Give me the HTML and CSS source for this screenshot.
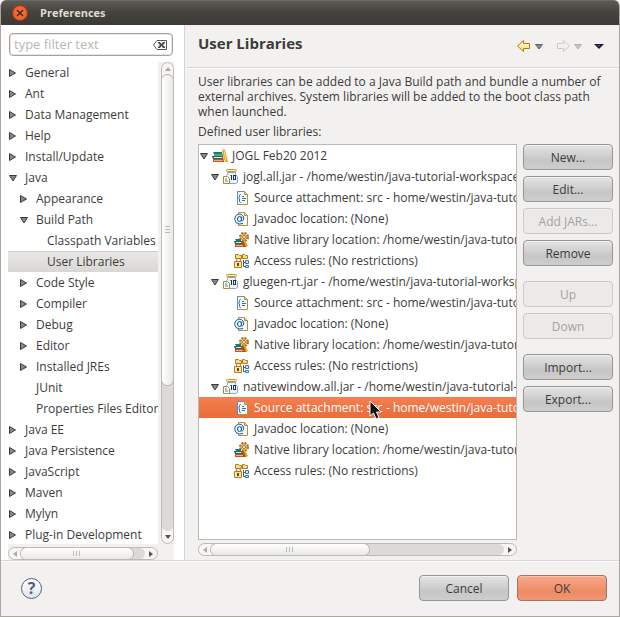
FILE: index.html
```html
<!DOCTYPE html>
<html lang="en">
<head>
<meta charset="utf-8">
<title>Preferences</title>
<link rel="stylesheet" href="styles.css">
</head>
<body>
<svg class="defs" aria-hidden="true">
  <defs>
    <linearGradient id="gold" x1="0" y1="0" x2="0" y2="1"><stop offset="0" stop-color="#fffbe0"/><stop offset="1" stop-color="#f8dc70"/></linearGradient>
    <symbol id="closed" viewBox="0 0 8 8"><path d="M.5 .5v7L6.500 4z" fill="#888" stroke="#3c3c3c"/></symbol>
    <symbol id="open" viewBox="0 0 8 8"><path d="M.5 1.500h7L4 7z" fill="#888" stroke="#3c3c3c"/></symbol>
    <symbol id="library" viewBox="0 0 16 16">
      <path d="M1 4h9v2H2z" fill="#16806f"/><path d="M2 6h9v2H2z" fill="#52a98d"/>
      <path d="M0 8h11v3H1z" fill="#17657c"/><path d="M2 9h9v1H2z" fill="#e4f0ce"/>
      <path d="M1 11h10v3H1z" fill="#c6532b"/><path d="M2 12h9v1H2z" fill="#f5b45e"/>
      <path d="M10 3l2-2 1 1 3 12h-3z" fill="#ed9b17"/><path d="M12 3l2 10" stroke="#ffe18a"/><path d="M10 10l1 4h1l-1-6z" fill="#a84d17"/>
    </symbol>
    <symbol id="jar" viewBox="0 0 16 16">
      <path d="M4.500 3.500h8v2l2 2v6l-2 1h-8l-1-1v-7l1-1z" fill="#edf4fa" stroke="#8fa3bd"/>
      <rect x="3.500" y=".5" width="10" height="2" rx="1" fill="#fff2b5" stroke="#c89531"/>
      <path d="M.5 7.500h4l2 2v5h-6z" fill="#fffdf1" stroke="#a98a3b"/><path d="M2 10h2M2 12h3" stroke="#587aa9"/>
      <path d="M8.500 6v5M7.500 6.500h1" fill="none" stroke="#183457"/><rect x="10.500" y="6.500" width="2" height="4" fill="none" stroke="#183457"/>
    </symbol>
    <symbol id="source" viewBox="0 0 16 16">
      <path d="M3.500 1.500h7l3 3v10h-10z" fill="#f4f9ff" stroke="#b1903d"/><path d="M3.500 14.500v-13h6" fill="none" stroke="#6f8baa"/><path d="M10.500 1.500v3h3" fill="#e9ce7b" stroke="#b1903d"/>
      <path d="M7 4.500H6.500q-1 0-1 1V7l-1 1 1 1v2.500q0 1 1 1H7M8 6.500h2M8 8.500h4M8 10.500h3" fill="none" stroke="#2876b2"/>
    </symbol>
    <symbol id="javadoc" viewBox="0 0 16 16">
      <path d="M4.500 1.500h6l3 3v10h-9z" fill="#f4f9ff" stroke="#b1903d"/><path d="M10.500 1.500v3h3" fill="#e9ce7b" stroke="#b1903d"/>
      <path d="M9 12.500Q5 14 2 11.500-.5 8 1.500 5 4 2 7.500 3.500 11 5.500 9.500 9 8 11 7 9.500L8 5.500" fill="#e9f5ff" stroke="#1f6299"/><ellipse cx="5.500" cy="8" rx="2" ry="2.500" fill="#e9f5ff" stroke="#174f86"/>
    </symbol>
    <symbol id="native" viewBox="0 0 16 16">
      <circle cx="10" cy="5" r="4" fill="none" stroke="#a6711d" stroke-width="2" stroke-dasharray="2 1.140"/><circle cx="10" cy="5" r="3" fill="#f9e2a8" stroke="#c4913c"/><circle cx="10" cy="5" r="1.500" fill="#fff" stroke="#a6711d"/>
      <path d="M1 7h6v2H2z" fill="#16806f"/><path d="M0 9h8v3H1z" fill="#17657c"/><path d="M2 10h6v1H2z" fill="#e4f0ce"/><path d="M1 12h9v3H1z" fill="#c6532b"/><path d="M2 13h7v1H2z" fill="#f5b45e"/><path d="M8 8l2-1 4 7-2 1z" fill="#ed9b17"/><path d="M7 10l3 5h2L9 8z" fill="#a84d17"/>
    </symbol>
    <symbol id="access" viewBox="0 0 16 16">
      <path d="M1.500 5.500v-4h3l1 1h2v3zM8.500 5.500v-4h2l1 1h2v3z" fill="#fbdc82" stroke="#b37a22"/>
      <path d="M9.500 7v6.500h2M9.500 9.500h2" fill="none" stroke="#375d8b"/><path d="M11.500 7.500h3v3h-3zM11.500 12.500h3v2h-3z" fill="#d9e9fa" stroke="#3973ab"/>
      <path d="M2.500 9V7q0-1.500 2-1.500t2 1.500v2" fill="none" stroke="#b37a22"/><path d="M.5 8.500h7v6h-7z" fill="#ffe5a0" stroke="#b37a22"/><path d="M3 10h2v3H3z" fill="#69451a"/>
    </symbol>
    <symbol id="up" viewBox="0 0 8 8"><path d="M1 6h6L4 2z"/></symbol>
    <symbol id="down" viewBox="0 0 8 8"><path d="M1 2h6L4 6z"/></symbol>
    <symbol id="left" viewBox="0 0 8 8"><path d="M6 1v6L2 4z"/></symbol>
    <symbol id="right" viewBox="0 0 8 8"><path d="M2 1v6l4-3z"/></symbol>
  </defs>
</svg>
<div class="window">
  <header class="titlebar">
    <button class="close" aria-label="Close"><svg viewBox="0 0 14 14"><path d="M4 4l6 6m0-6l-6 6" stroke="#47271b" stroke-width="1.500"/></svg></button>
    <span>Preferences</span>
  </header>
  <div class="body">
    <nav class="sidebar" aria-label="Preference pages">
      <div class="filter">
        <input type="text" placeholder="type filter text" aria-label="Filter text">
        <button aria-label="Clear filter"><svg viewBox="0 0 16 12"><path d="M5 1.500h9.500v9H5L1.500 6z" fill="#fff" stroke="#555"/><path d="M6 3h2l1.500 2L11 3h2v1l-2 2 2 2v1h-2L9.500 7 8 9H6V8l2-2-2-2z" fill="#4c4c4c"/></svg></button>
      </div>
      <div class="pane">
        <ul class="tree">
          <li class="row"><svg class="arrow"><use href="#closed"/></svg>General</li>
          <li class="row"><svg class="arrow"><use href="#closed"/></svg>Ant</li>
          <li class="row"><svg class="arrow"><use href="#closed"/></svg>Data Management</li>
          <li class="row"><svg class="arrow"><use href="#closed"/></svg>Help</li>
          <li class="row"><svg class="arrow"><use href="#closed"/></svg>Install/Update</li>
          <li class="row"><svg class="arrow"><use href="#open"/></svg>Java</li>
          <li class="row level-2"><svg class="arrow"><use href="#closed"/></svg>Appearance</li>
          <li class="row level-2"><svg class="arrow"><use href="#open"/></svg>Build Path</li>
          <li class="row level-3"><span class="arrow"></span>Classpath Variables</li>
          <li class="row level-3 current"><span class="arrow"></span>User Libraries</li>
          <li class="row level-2"><svg class="arrow"><use href="#closed"/></svg>Code Style</li>
          <li class="row level-2"><svg class="arrow"><use href="#closed"/></svg>Compiler</li>
          <li class="row level-2"><svg class="arrow"><use href="#closed"/></svg>Debug</li>
          <li class="row level-2"><svg class="arrow"><use href="#closed"/></svg>Editor</li>
          <li class="row level-2"><svg class="arrow"><use href="#closed"/></svg>Installed JREs</li>
          <li class="row level-2"><span class="arrow"></span>JUnit</li>
          <li class="row level-2"><span class="arrow"></span>Properties Files Editor</li>
          <li class="row"><svg class="arrow"><use href="#closed"/></svg>Java EE</li>
          <li class="row"><svg class="arrow"><use href="#closed"/></svg>Java Persistence</li>
          <li class="row"><svg class="arrow"><use href="#closed"/></svg>JavaScript</li>
          <li class="row"><svg class="arrow"><use href="#closed"/></svg>Maven</li>
          <li class="row"><svg class="arrow"><use href="#closed"/></svg>Mylyn</li>
          <li class="row"><svg class="arrow"><use href="#closed"/></svg>Plug-in Development</li>
        </ul>
        <div class="scroll vertical"><svg class="faint"><use href="#up"/></svg><div class="track"><div class="thumb"></div></div><svg><use href="#down"/></svg></div>
        <div class="scroll horizontal"><svg class="faint"><use href="#left"/></svg><div class="track"><div class="thumb wide"></div></div><svg><use href="#right"/></svg></div>
      </div>
    </nav>
    <main class="page">
      <div class="page-head">
        <h1>User Libraries</h1>
        <button class="tool" aria-label="Back"><svg class="history" viewBox="0 0 28 14"><path d="M1.500 7l6-5.500v3h6v5h-6v3z" fill="url(#gold)" stroke="#b27a0b"/><path d="M19.500 5.500h7L23 10z" fill="#888" stroke="#666"/></svg></button>
        <button class="tool" aria-label="Forward" disabled><svg class="history" viewBox="0 0 28 14"><path d="M14.500 7l-6-5.500v3h-6v5h6v3z" fill="#f2f1f0" stroke="#cdcbc8"/><path d="M19.500 5.500h7L23 10z" fill="#c4c2bf" stroke="#b6b4b1"/></svg></button>
        <button class="tool" aria-label="Menu"><svg class="menu" viewBox="0 0 10 14"><path d="M0 5h10L5 10z" fill="#171727"/><path d="M2 6h5L5 8z" fill="#524887"/></svg></button>
      </div>
      <div class="content">
        <p class="description">User libraries can be added to a Java Build path and bundle a number of external archives. System libraries will be added to the boot class path when launched.</p>
        <p class="caption">Defined user libraries:</p>
        <div class="columns">
          <div class="library-pane">
            <ul class="libraries">
              <li class="row"><svg class="arrow"><use href="#open"/></svg><svg class="icon"><use href="#library"/></svg>JOGL Feb20 2012</li>
              <li class="row level-2"><svg class="arrow"><use href="#open"/></svg><svg class="icon"><use href="#jar"/></svg>jogl.all.jar - /home/westin/java-tutorial-workspace/jogl</li>
              <li class="row level-3"><span class="arrow"></span><svg class="icon"><use href="#source"/></svg>Source attachment: src - home/westin/java-tutorial</li>
              <li class="row level-3"><span class="arrow"></span><svg class="icon"><use href="#javadoc"/></svg>Javadoc location: (None)</li>
              <li class="row level-3"><span class="arrow"></span><svg class="icon"><use href="#native"/></svg>Native library location: /home/westin/java-tutorial</li>
              <li class="row level-3"><span class="arrow"></span><svg class="icon"><use href="#access"/></svg>Access rules: (No restrictions)</li>
              <li class="row level-2"><svg class="arrow"><use href="#open"/></svg><svg class="icon"><use href="#jar"/></svg>gluegen-rt.jar - /home/westin/java-tutorial-workspace</li>
              <li class="row level-3"><span class="arrow"></span><svg class="icon"><use href="#source"/></svg>Source attachment: src - home/westin/java-tutorial</li>
              <li class="row level-3"><span class="arrow"></span><svg class="icon"><use href="#javadoc"/></svg>Javadoc location: (None)</li>
              <li class="row level-3"><span class="arrow"></span><svg class="icon"><use href="#native"/></svg>Native library location: /home/westin/java-tutorial</li>
              <li class="row level-3"><span class="arrow"></span><svg class="icon"><use href="#access"/></svg>Access rules: (No restrictions)</li>
              <li class="row level-2"><svg class="arrow"><use href="#open"/></svg><svg class="icon"><use href="#jar"/></svg>nativewindow.all.jar - /home/westin/java-tutorial-workspace</li>
              <li class="row level-3 selected"><span class="arrow"></span><svg class="icon"><use href="#source"/></svg>Source attachment: src - home/westin/java-tutorial<svg class="pointer" viewBox="0 0 13 20"><path d="M1 1v15l3.500-3 2.500 6 3-1.500-2.500-5.500H12z" fill="#111" stroke="#fff"/></svg></li>
              <li class="row level-3"><span class="arrow"></span><svg class="icon"><use href="#javadoc"/></svg>Javadoc location: (None)</li>
              <li class="row level-3"><span class="arrow"></span><svg class="icon"><use href="#native"/></svg>Native library location: /home/westin/java-tutorial</li>
              <li class="row level-3"><span class="arrow"></span><svg class="icon"><use href="#access"/></svg>Access rules: (No restrictions)</li>
            </ul>
            <div class="scroll horizontal"><svg class="faint"><use href="#left"/></svg><div class="track"><div class="thumb"></div></div><svg><use href="#right"/></svg></div>
          </div>
          <div class="actions">
            <div class="group"><button class="button">New...</button><button class="button">Edit...</button><button class="button" disabled>Add JARs...</button><button class="button">Remove</button></div>
            <div class="group"><button class="button" disabled>Up</button><button class="button" disabled>Down</button></div>
            <div class="group"><button class="button">Import...</button><button class="button">Export...</button></div>
          </div>
        </div>
      </div>
    </main>
  </div>
  <footer class="footer">
    <button class="help" aria-label="Help">?</button>
    <button class="button">Cancel</button>
    <button class="button primary">OK</button>
  </footer>
</div>
</body>
</html>
```
FILE: styles.css
```css
* { box-sizing: border-box; }
body { margin: 0; background: #fff; color: #3c3c3c; font: 12px/15px "Open Sans", sans-serif; }
button, input { font: inherit; color: inherit; }
button { padding: 0; border: 0; background: none; }
ul, p, h1 { margin: 0; padding: 0; list-style: none; }
svg { display: block; flex: none; }
.defs { position: absolute; width: 0; height: 0; }

.window { display: flex; flex-direction: column; height: 100vh; min-height: 560px; overflow: hidden; background: #f2f1f0; border: solid #aaa6a1; border-width: 0 1px 1px; border-radius: 6px 6px 0 0; }
.titlebar { display: flex; align-items: center; gap: 12px; flex: none; height: 25px; padding: 0 11px 1px; background: linear-gradient(#5b5a55, #44433e 45%, #3b3a36); border-top: 1px solid #6c6a65; color: #dfdbd2; font-size: 11px; font-weight: bold; }
.close { width: 16px; height: 16px; border: 1px solid #a33b18; border-radius: 50%; background: radial-gradient(#f57848, #e95420); }
.close svg { width: 14px; height: 14px; }

.body { display: flex; flex: 1; min-height: 0; border-bottom: 1px solid #d8d6d4; }
.sidebar { display: flex; flex-direction: column; gap: 6px; flex: none; width: 184px; padding: 8px 10px 0 7px; background: #fff; border-right: 1px solid #d6d4d2; }
.filter { display: flex; align-items: center; flex: none; height: 23px; margin: 0 1px; padding: 0 4px; border: 1px solid #a5a29e; border-radius: 4px; background: #fff; box-shadow: inset 0 0 0 1px #e6e4e2; }
.filter input { flex: 1; min-width: 0; padding: 0; border: 0; outline: 0; background: none; font-size: 13px; }
.filter input::placeholder { color: #b9b7b4; }
.filter svg { width: 16px; height: 12px; }
.pane { display: grid; grid-template: minmax(0, 1fr) 16px / minmax(0, 1fr) 16px; flex: 1; min-height: 0; background: #f2f1f0; }
.tree { overflow: hidden; background: #fff; }

.row { position: relative; display: flex; align-items: center; height: 21px; padding-left: 1px; white-space: nowrap; }
.level-2 { padding-left: 12px; }
.level-3 { padding-left: 23px; }
.arrow { flex: none; width: 8px; height: 8px; margin-right: 8px; }
.current { background: linear-gradient(#cfcdca 1px, #e9e8e6 1px, #d9d7d5); }

.scroll { display: flex; align-items: center; overflow: hidden; border: 1px solid #bdbab6; border-radius: 7px; background: #f7f6f5; }
.scroll > svg { width: 8px; height: 8px; fill: #555; }
.scroll > .faint { fill: #aaa; }
.vertical { flex-direction: column; justify-self: end; width: 13px; padding: 2px 0; }
.horizontal { align-self: end; width: 100%; height: 13px; padding: 0 2px; }
.track { display: flex; flex: 1; background: #dcdad7; }
.vertical .track { width: 100%; margin: 2px 0; border-radius: 6px; }
.horizontal .track { height: 100%; margin: 0 2px; border-radius: 6px; }
.thumb { border-radius: 6px; box-shadow: 0 0 0 1px #b5b2ae; background: repeating-linear-gradient(#bbb 0 1px, transparent 1px 3px) center / 5px 8px no-repeat, linear-gradient(90deg, #fff, #e9e8e6); }
.vertical .thumb { width: 100%; height: 68%; }
.horizontal .thumb { height: 100%; width: 54%; background: repeating-linear-gradient(90deg, #bbb 0 1px, transparent 1px 3px) center / 8px 5px no-repeat, linear-gradient(#fff, #e9e8e6); }
.horizontal .wide { width: 90%; }

.page { display: flex; flex-direction: column; flex: 1; min-width: 0; margin-left: 1px; }
.page-head { display: flex; align-items: center; gap: 11px; flex: none; height: 43px; padding: 0 15px 0 12px; border-bottom: 1px solid #d8d6d4; box-shadow: 0 1px #fafafa; }
.page-head h1 { flex: 1; padding-bottom: 6px; font-size: 15px; line-height: 20px; }
.history { width: 28px; height: 14px; }
.menu { width: 10px; height: 14px; }
.content { display: flex; flex-direction: column; flex: 1; min-height: 0; padding: 6px 6px 4px 12px; }
.caption { margin: 5px 0; }
.columns { display: flex; gap: 6px; flex: 1; min-height: 0; }
.library-pane { display: flex; flex-direction: column; gap: 3px; flex: 1; min-width: 0; }
.libraries { flex: 1; min-height: 0; overflow: hidden; border: 1px solid #bdbab6; background: #fff; }
.libraries .arrow { margin-right: 4px; }
.icon { width: 16px; height: 16px; margin-right: 4px; }
.selected { background: linear-gradient(#f47f50, #e96c3c); color: #fff; }
.pointer { position: absolute; left: 170px; top: 3px; width: 13px; height: 20px; z-index: 1; }

.actions { display: flex; flex-direction: column; gap: 15px; flex: none; width: 90px; }
.group { display: flex; flex-direction: column; gap: 6px; }
.button { width: 90px; height: 26px; border: 1px solid #989693; border-radius: 4px; background: linear-gradient(#e4e4e4, #c6c6c6 65%, #cecece); box-shadow: inset 0 1px #f1f1f1; }
.button:disabled { border-color: #cbc9c6; background: #ebeae9; color: #a5a3a0; }
.primary { border-color: #a1766a; background: linear-gradient(#f8a889, #ed8b65 65%, #ef9672); box-shadow: inset 0 1px #fbc0a8; }

.footer { display: flex; align-items: center; gap: 8px; flex: none; height: 55px; padding: 0 12px 2px 20px; border-top: 1px solid #fafafa; }
.help { width: 21px; height: 21px; margin-right: auto; border: 1px solid #4f6083; border-radius: 50%; background: linear-gradient(#fff, #e0e3e9); color: #4f6083; font-size: 16px; font-weight: bold; line-height: 18px; }
```
